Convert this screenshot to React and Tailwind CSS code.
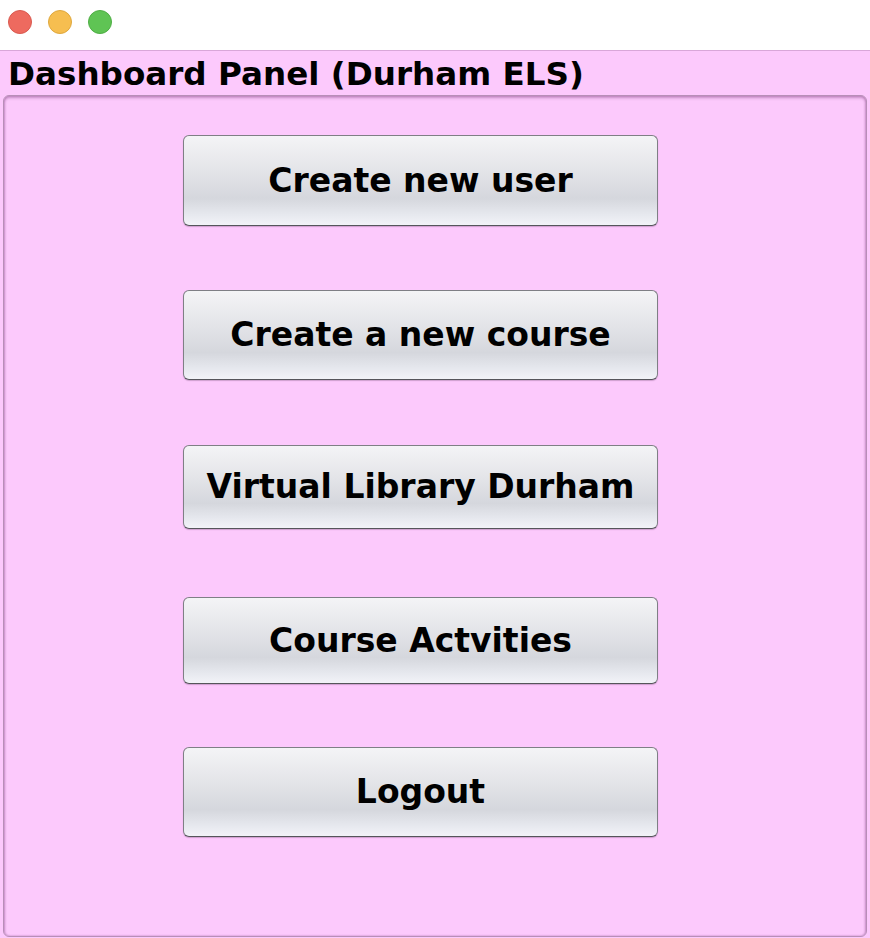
const buttons = [
  { label: "Create new user", h: "h-[91px]", mt: "mt-[39px]" },
  { label: "Create a new course", h: "h-[90px]", mt: "mt-[64px]" },
  { label: "Virtual Library Durham", h: "h-[84px]", mt: "mt-[65px]" },
  { label: "Course Actvities", h: "h-[87px]", mt: "mt-[68px]" },
  { label: "Logout", h: "h-[90px]", mt: "mt-[63px]" },
];

export default function App() {
  return (
    <div className="w-[870px] h-[938px] flex flex-col bg-[#fcc9fc] font-['DejaVu_Sans',sans-serif] overflow-hidden">
      {/* window title bar */}
      <div className="h-[51px] shrink-0 bg-white border-b border-[#d9a7d9] flex items-start gap-4 pl-2 pt-[10px]">
        <span className="w-6 h-6 rounded-full bg-[#ee6a5f] border border-[#d95a50]" />
        <span className="w-6 h-6 rounded-full bg-[#f6be50] border border-[#dfa83e]" />
        <span className="w-6 h-6 rounded-full bg-[#5fc454] border border-[#4fae45]" />
      </div>

      {/* heading */}
      <div className="h-[44px] shrink-0 pl-[8px] pt-[5px]">
        <h1 className="text-[32.6px] leading-[36px] font-bold text-black whitespace-nowrap">
          Dashboard Panel (Durham ELS)
        </h1>
      </div>

      {/* panel */}
      <div className="flex-1 mx-[3px] mb-[1px] pl-[179px] rounded-[6px] border border-[#b88eb8] shadow-[inset_0_2px_3px_rgba(150,90,150,0.5),inset_1px_0_2px_rgba(150,90,150,0.35),inset_-1px_0_2px_rgba(150,90,150,0.35)] flex flex-col items-start">
        {buttons.map((b) => (
          <button
            key={b.label}
            className={`${b.h} ${b.mt} w-[475px] shrink-0 rounded-[6px] border-[1.5px] border-[#7f7f85] border-b-[#55555b] bg-[linear-gradient(to_bottom,#f4f4f6_0%,#e3e4e8_40%,#d5d7dd_70%,#e6e8ee_88%,#f2f3f8_100%)] shadow-[0_1px_1px_rgba(120,80,120,0.35)] text-[33px] font-bold text-black`}
          >
            {b.label}
          </button>
        ))}
      </div>
    </div>
  );
}
